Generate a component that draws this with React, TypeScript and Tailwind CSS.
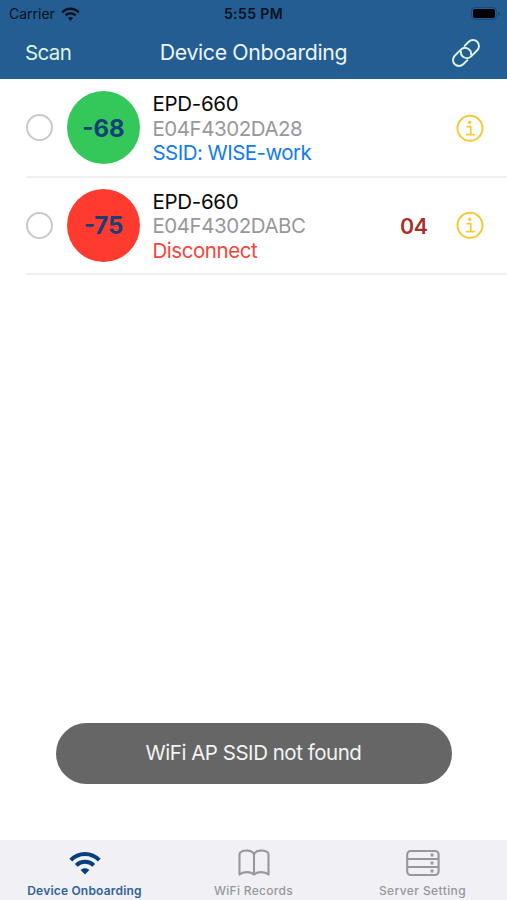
import React from "react";

function Wifi({ className }: { className: string }) {
  return (
    <svg viewBox="0 0 32 24" className={className} fill="none" stroke="currentColor">
      <path d="M1.8 9.2C9.6 1 22.4 1 30.2 9.2" strokeWidth="4" />
      <path d="M7.3 14.4C12 9.6 20 9.6 24.7 14.4" strokeWidth="4" />
      <path d="M16 23.4l-4.4-4.5c2.5-2.3 6.3-2.3 8.8 0z" fill="currentColor" stroke="none" />
    </svg>
  );
}

function LinkIcon() {
  const half = "M17.5 19.64A6 6 0 0 0 13.7 9H5.1A6 6 0 0 0 5.1 21H11";
  return (
    <svg viewBox="0 0 30 30" className="h-[30px] w-[30px] text-[#dcf5dc]" fill="none" stroke="currentColor" strokeWidth="1.9" strokeLinecap="round">
      <g transform="rotate(-45 15 15)">
        <path d={half} />
        <path d={half} transform="rotate(180 15 15)" />
      </g>
    </svg>
  );
}

function InfoIcon() {
  return (
    <svg viewBox="0 0 28 28" className="h-7 w-7 text-[#f6ca35]" fill="none" stroke="currentColor">
      <circle cx="14" cy="14.3" r="12.5" strokeWidth="2" />
      <circle cx="13.7" cy="8.3" r="1.7" fill="currentColor" stroke="none" />
      <path d="M11.2 12.7H14.7V20.5M10.8 20.6H18" strokeWidth="1.8" strokeLinecap="round" strokeLinejoin="round" />
    </svg>
  );
}

function BookIcon() {
  return (
    <svg viewBox="0 0 32 28" className="h-7 w-8" fill="none" stroke="currentColor" strokeWidth="2.1" strokeLinejoin="round">
      <path d="M16 5.4C14.5 .9 5.5 .5 2.2 3.6C1.6 4.2 1.5 4.7 1.5 5.5V25.6C5 22.4 12.5 22.2 16 25.6C19.5 22.2 27 22.4 30.5 25.6V5.5C30.5 4.7 30.4 4.2 29.8 3.6C26.5 .5 17.5 .9 16 5.4V25.6" />
    </svg>
  );
}

function ServerIcon() {
  return (
    <svg viewBox="0 0 34 28" className="h-7 w-[34px]" fill="none" stroke="currentColor" strokeWidth="2.1">
      <rect x="1.2" y="2" width="31.4" height="24" rx="3.5" />
      <path d="M1.2 10H32.6M1.2 18H32.6" />
      <path d="M26 4.6v2.8M26 12.6v2.8M26 20.6v2.8" strokeWidth="2.8" />
    </svg>
  );
}

type Device = {
  rssi: string;
  mac: string;
  status: string;
  circle: string;
  statusColor: string;
  code?: string;
};

const devices: Device[] = [
  { rssi: "-68", mac: "E04F4302DA28", status: "SSID: WISE-work", circle: "bg-[#34c759]", statusColor: "text-[#137bf3] tracking-[-0.54px]" },
  { rssi: "-75", mac: "E04F4302DABC", status: "Disconnect", circle: "bg-[#ff3b30]", statusColor: "text-[#f7443b] tracking-[-0.45px]", code: "04" },
];

function DeviceRow({ d }: { d: Device }) {
  return (
    <li className="ml-[26px] flex h-[97.5px] items-center border-b-2 border-[#f0f0f1] pr-[23px]">
      <span className="h-[27px] w-[27px] shrink-0 rounded-full border-2 border-[#c9c9cb]" />
      <span className={`ml-[14px] flex h-[73px] w-[73px] shrink-0 items-center justify-center rounded-full pt-0.5 text-[24px] font-bold text-[#164076] ${d.circle}`}>
        {d.rssi}
      </span>
      <div className="ml-[12.5px] flex-1 pt-0.5 text-[20.5px] leading-[24.5px] whitespace-nowrap">
        <p className="tracking-[-0.3px] text-[#0b0b0b]">EPD-660</p>
        <p className="tracking-[-0.46px] text-[#98989b]">{d.mac}</p>
        <p className={d.statusColor}>{d.status}</p>
      </div>
      {d.code && <span className="mr-7 pt-px text-[21.5px] font-semibold tracking-[-0.2px] text-[#a3322b]">{d.code}</span>}
      <InfoIcon />
    </li>
  );
}

export default function App() {
  return (
    <div className="flex h-[900px] w-[507px] flex-col overflow-hidden bg-white font-['Inter','Liberation_Sans',sans-serif]">
      <header className="h-[79px] shrink-0 bg-[#245d92] text-[#eaf4fb]">
        <div className="grid h-[27px] grid-cols-3 items-center px-[7px] text-[#07111e]">
          <div className="flex items-center gap-[6px] pl-0.5 text-[14px]">
            <span>Carrier</span>
            <Wifi className="h-[14px] w-[19px]" />
          </div>
          <span className="text-center text-[14px] font-semibold tracking-[0.4px]">5:55 PM</span>
          <div className="flex items-center justify-end gap-px">
            <span className="rounded-[4px] border border-[#1b4a77] p-px">
              <span className="block h-[9px] w-[22px] rounded-[2px] bg-black" />
            </span>
            <span className="h-1 w-[2px] rounded-r bg-[#1b4a77]" />
          </div>
        </div>
        <div className="grid h-[52px] grid-cols-[1fr_auto_1fr] items-center px-[26px] text-[21.3px]">
          <span className="-ml-px text-[20.5px] tracking-[-0.6px] text-[#dcf5dc]">Scan</span>
          <h1 className="tracking-[-0.35px]">Device Onboarding</h1>
          <span className="flex justify-end"><LinkIcon /></span>
        </div>
      </header>
      <ul className="pt-px">
        {devices.map((d) => (
          <DeviceRow key={d.mac} d={d} />
        ))}
      </ul>
      <div className="mx-auto mt-auto mb-[56.5px] flex h-[61px] w-[396px] shrink-0 items-center justify-center rounded-full bg-[#666666] pt-px text-[20.5px] tracking-[-0.48px] text-[#f3f3f3]">
        WiFi AP SSID not found
      </div>
      <nav className="grid h-[60px] shrink-0 grid-cols-3 bg-[#f0f0f5] pt-[9px] text-[12px] leading-[14px] font-medium tracking-[0.3px] text-[#97979c]">
        <div className="flex flex-col items-center gap-[7px]">
          <span className="flex h-7 items-center text-[#063f7c]"><Wifi className="h-6 w-8" /></span>
          <span className="font-semibold tracking-[0.2px] text-[#30639a]">Device Onboarding</span>
        </div>
        <div className="flex flex-col items-center gap-[7px]"><BookIcon /><span>WiFi Records</span></div>
        <div className="flex flex-col items-center gap-[7px]"><ServerIcon /><span className="tracking-[0.4px]">Server Setting</span></div>
      </nav>
    </div>
  );
}
